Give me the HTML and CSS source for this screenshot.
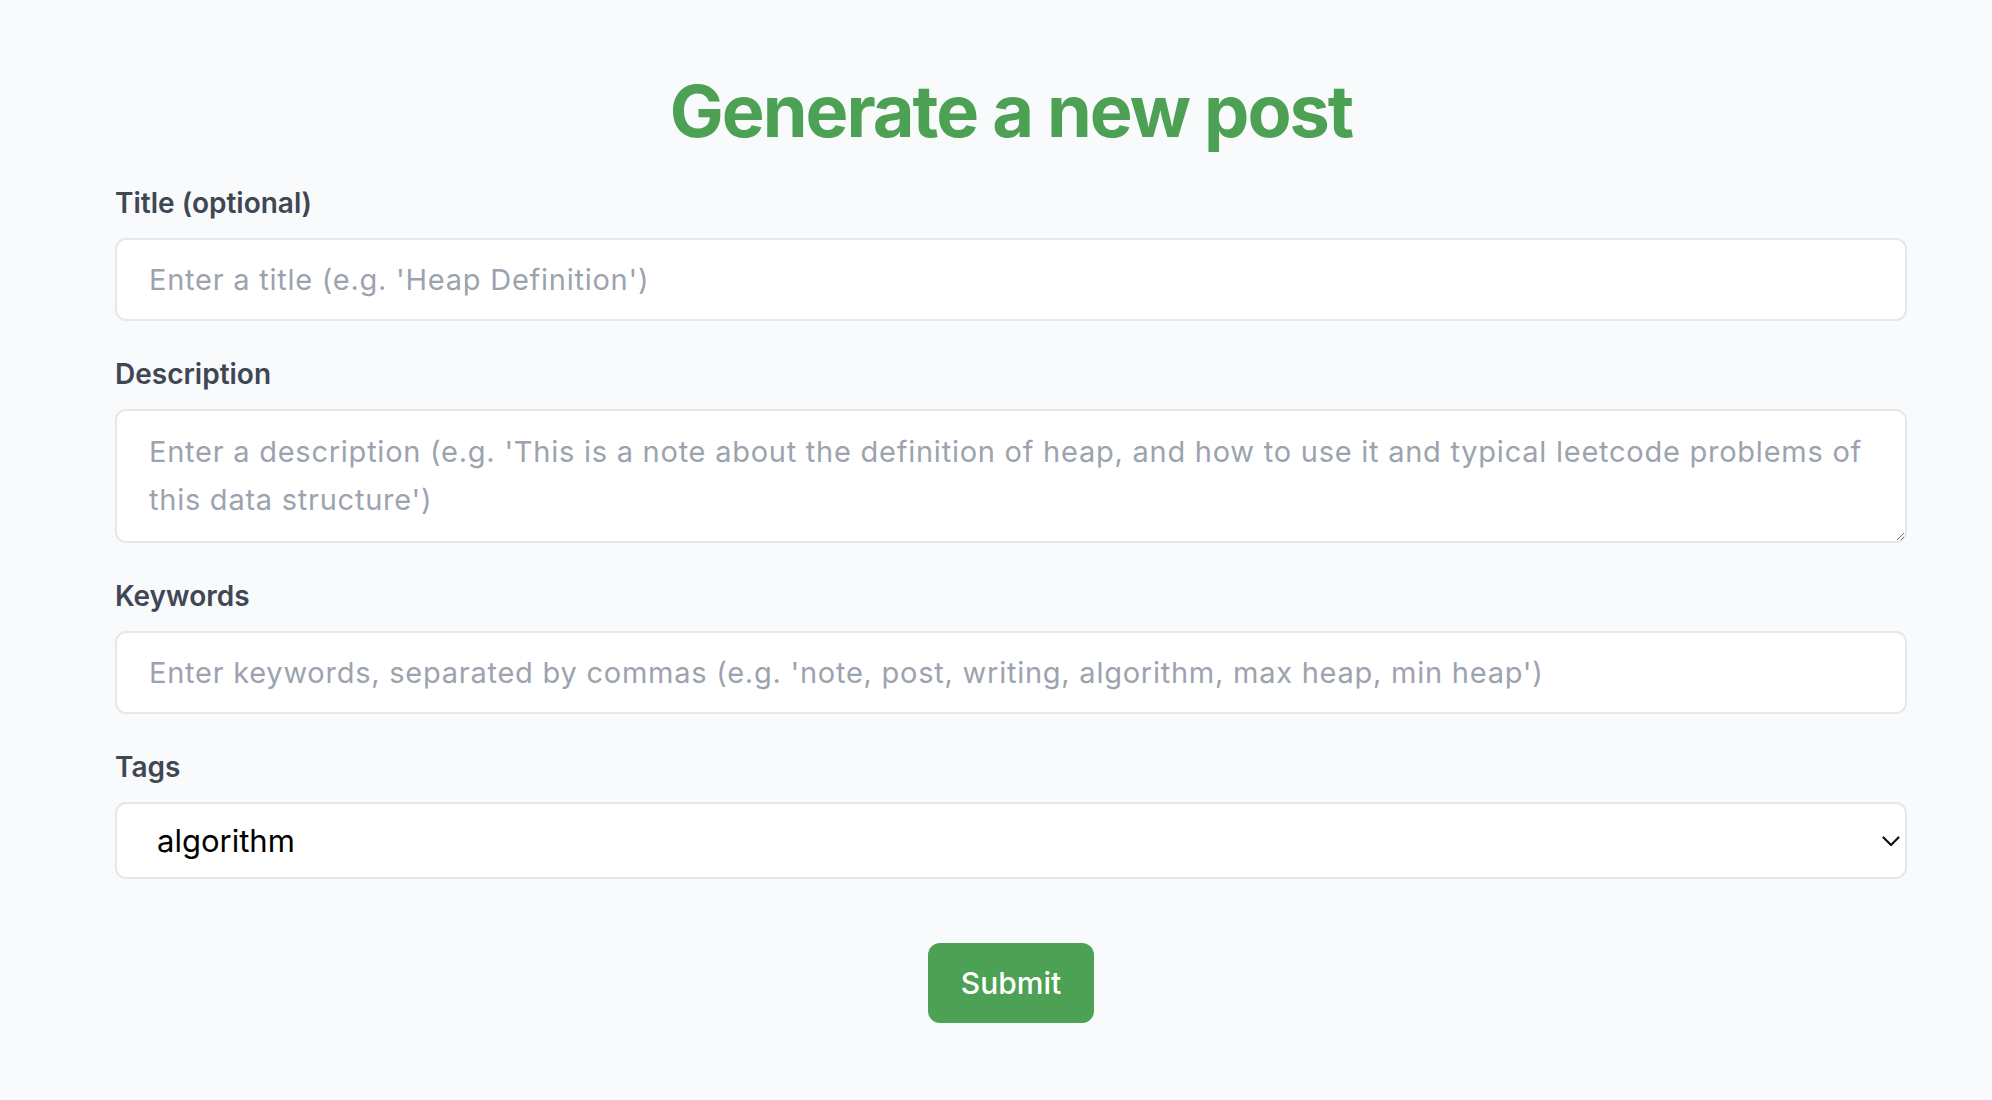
FILE: index.html
```html
<!DOCTYPE html>
<html lang="en">
<head>
<meta charset="utf-8">
<title>Generate a new post</title>
<link rel="stylesheet" href="styles.css">
</head>
<body>
<main class="page">
  <h1 class="heading">Generate a new post</h1>
  <form class="form">
    <div class="field">
      <label class="label" for="title">Title (optional)</label>
      <input class="control input" id="title" type="text" placeholder="Enter a title (e.g. 'Heap Definition')">
    </div>
    <div class="field">
      <label class="label" for="desc">Description</label>
      <textarea class="control textarea" id="desc" placeholder="Enter a description (e.g. 'This is a note about the definition of heap, and how to use it and typical leetcode problems of this data structure')"></textarea>
    </div>
    <div class="field">
      <label class="label" for="kw">Keywords</label>
      <input class="control input" id="kw" type="text" placeholder="Enter keywords, separated by commas (e.g. 'note, post, writing, algorithm, max heap, min heap')">
    </div>
    <div class="field">
      <label class="label" for="tags">Tags</label>
      <div class="select-wrap">
        <select class="control select" id="tags">
          <option>algorithm</option>
        </select>
        <svg class="chevron" width="18" height="11" viewBox="0 0 18 11" aria-hidden="true"><path d="M1.5 1.5 L9 9 L16.5 1.5" fill="none" stroke="#111" stroke-width="2.2" stroke-linecap="round" stroke-linejoin="round"/></svg>
      </div>
    </div>
    <div class="actions">
      <button class="submit" type="button">Submit</button>
    </div>
  </form>
</main>
</body>
</html>
```

FILE: styles.css
```css
* { box-sizing: border-box; }
html, body { margin: 0; padding: 0; }
body {
  background: #f9fafb;
  font-family: Inter, "Noto Sans", "Liberation Sans", sans-serif;
  color: #374151;
}
.page {
  padding: 71px 85px 0 115px;
  min-height: 1100px;
}
.heading {
  margin: 0;
  text-align: center;
  font-size: 72px;
  line-height: 80px;
  font-weight: 700;
  color: #4ca154;
  letter-spacing: -2px;
}
.form {
  display: flex;
  flex-direction: column;
  gap: 37px;
  margin-top: 36px;
}
.field {
  display: flex;
  flex-direction: column;
  gap: 19px;
}
.label {
  font-size: 28px;
  line-height: 32px;
  font-weight: 600;
  color: #3f4754;
}
.control {
  width: 100%;
  background: #fff;
  border: 2px solid #e5e7eb;
  border-radius: 11px;
  font-family: inherit;
  outline: none;
  margin: 0;
}
.control::placeholder { color: #9ca3af; opacity: 1; }
.input {
  height: 83px;
  padding: 0 32px;
  font-size: 29px;
  letter-spacing: 0.75px;
  color: #111;
}
.textarea {
  display: block;
  height: 134px;
  padding: 17px 32px;
  font-size: 29px;
  letter-spacing: 0.75px;
  line-height: 48px;
  resize: vertical;
  color: #111;
}
.select-wrap { position: relative; }
.select {
  display: block;
  -webkit-appearance: none;
  appearance: none;
  height: 77px;
  padding: 0 40px;
  font-size: 31px;
  color: #000;
}
.chevron {
  position: absolute;
  right: 7px;
  top: 34px;
  pointer-events: none;
}
.actions {
  display: flex;
  justify-content: center;
  margin-top: 27px;
}
.submit {
  height: 80px;
  padding: 0 33px;
  border: none;
  border-radius: 12px;
  background: #4ca154;
  color: #fff;
  font-family: inherit;
  font-size: 30px;
  font-weight: 500;
}
```
